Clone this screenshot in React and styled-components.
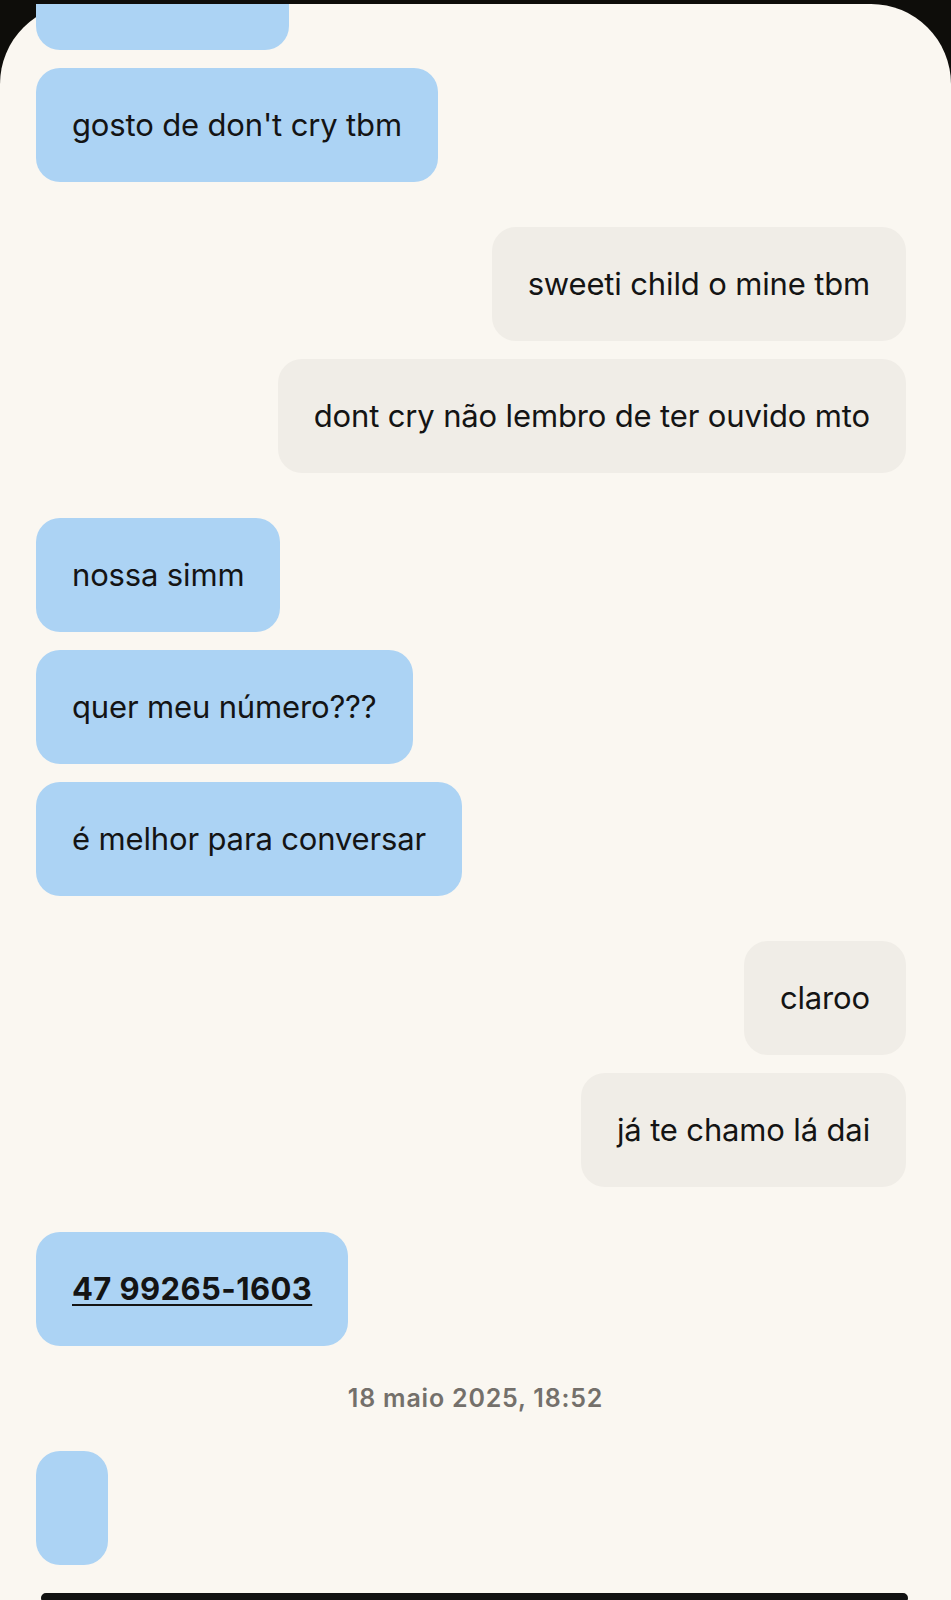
import React from "react";
import styled, { createGlobalStyle } from "styled-components";

const Global = createGlobalStyle`
  html, body { margin: 0; padding: 0; background: #0e0d0a; }
  body { font-family: Inter, "Noto Sans", sans-serif; -webkit-font-smoothing: antialiased; }
`;

const Screen = styled.div`
  margin-top: 4px;
  height: 1596px;
  background: #faf7f1;
  border-radius: 80px 80px 0 0;
  clip-path: inset(0);
  display: flex;
  flex-direction: column;
`;

const Thread = styled.div`
  display: flex;
  flex-direction: column;
  padding: 0 45px 0 36px;
  margin-top: -68px;
`;

const Group = styled.div`
  display: flex;
  flex-direction: column;
  align-items: ${(p) => (p.$mine ? "flex-end" : "flex-start")};
  gap: 18px;
  & + & { margin-top: 45px; }
`;

const Bubble = styled.div`
  box-sizing: border-box;
  height: 114px;
  padding: 0 36px;
  display: flex;
  align-items: center;
  border-radius: 24px;
  background: ${(p) => (p.$mine ? "#f0ede7" : "#acd3f4")};
  color: #141414;
  font-size: 31px;
  line-height: 36px;
  letter-spacing: -0.15px;
  white-space: nowrap;
  width: ${(p) => (p.$w ? `${p.$w}px` : "auto")};
`;

const Phone = styled.span`
  font-weight: 700;
  letter-spacing: 0.4px;
  text-decoration: underline;
  text-decoration-thickness: 2px;
  text-underline-offset: 4px;
`;

const Stamp = styled.div`
  margin: 37px -45px 38px -36px;
  text-align: center;
  font-size: 25px;
  line-height: 30px;
  font-weight: 600;
  color: #74706b;
  letter-spacing: 0.8px;
`;

const Composer = styled.div`
  margin: 28px 43px 0 41px;
  height: 80px;
  border: 5px solid #111;
  border-radius: 30px;
`;

export default function App() {
  return (
    <>
      <Global />
      <Screen>
        <Thread>
          <Group>
            <Bubble $w={253} />
            <Bubble>gosto de don't cry tbm</Bubble>
          </Group>
          <Group $mine>
            <Bubble $mine>sweeti child o mine tbm</Bubble>
            <Bubble $mine>dont cry não lembro de ter ouvido mto</Bubble>
          </Group>
          <Group>
            <Bubble>nossa simm</Bubble>
            <Bubble>quer meu número???</Bubble>
            <Bubble>é melhor para conversar</Bubble>
          </Group>
          <Group $mine>
            <Bubble $mine>claroo</Bubble>
            <Bubble $mine>já te chamo lá dai</Bubble>
          </Group>
          <Group>
            <Bubble>
              <Phone>47 99265-1603</Phone>
            </Bubble>
          </Group>
          <Stamp>18 maio 2025, 18:52</Stamp>
          <Group>
            <Bubble $w={69} />
          </Group>
        </Thread>
        <Composer />
      </Screen>
    </>
  );
}
